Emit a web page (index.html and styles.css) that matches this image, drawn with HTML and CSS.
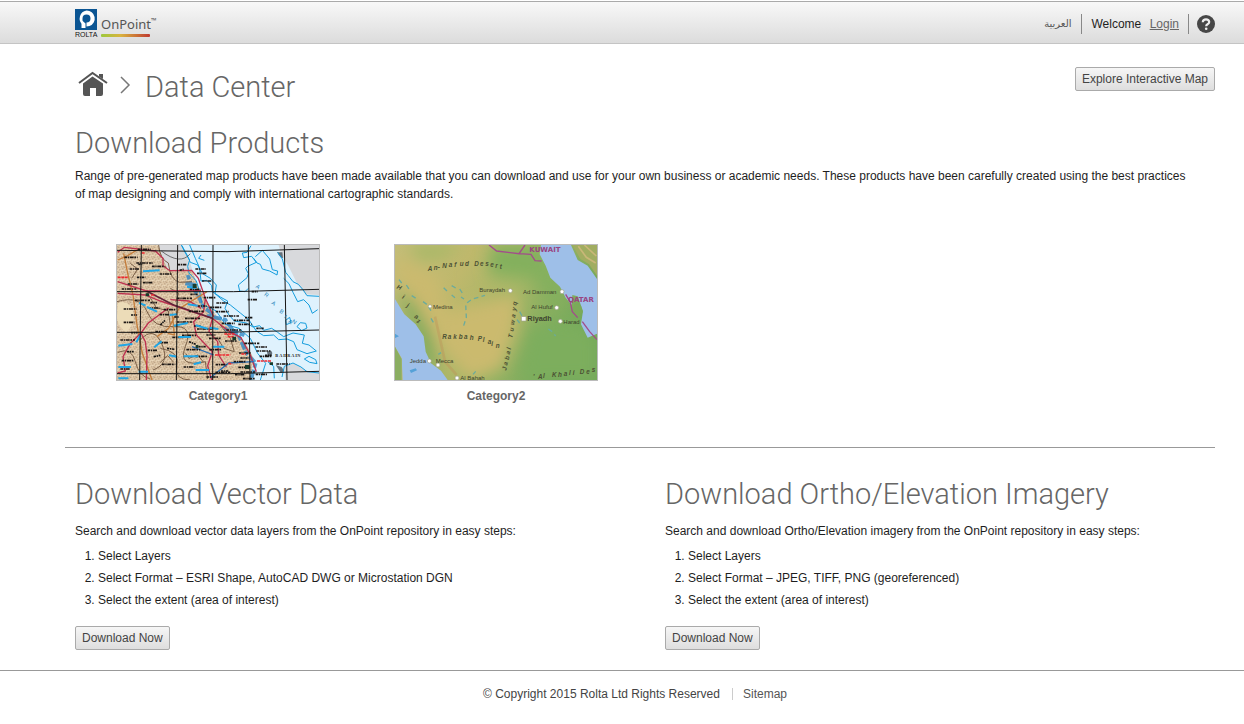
FILE: index.html
```html
<!DOCTYPE html>
<html lang="en">
<head>
<meta charset="utf-8">
<meta name="viewport" content="width=device-width, initial-scale=1">
<title>Data Center</title>
<link rel="stylesheet" href="styles.css">
</head>
<body>
<header class="header">
<a class="logo" href="#" aria-label="Rolta OnPoint">
<svg width="86" height="32" viewBox="0 0 86 32">
<rect x="0" y="1" width="22" height="21" fill="#0b5593"/>
<path d="M11.500 2.500A8 8 0 0 1 14.500 18L11.500 18.500V14.500A4 4 0 1 0 7.500 10.500V16.500A8 8 0 0 1 11.500 2.500Z" fill="#fff"/>
<path d="M6.500 12L10.500 15.500V20H6.500Z" fill="#fff"/>
<text x="0" y="29" class="logo-rolta">ROLTA</text>
<text x="26" y="21" class="logo-name">OnPoint</text>
<text x="76" y="15" class="logo-tm">™</text>
<defs>
<linearGradient id="bar"><stop offset="0" stop-color="#9cc93c"/><stop offset=".4" stop-color="#d9b33f"/><stop offset="1" stop-color="#bf3a31"/></linearGradient>
</defs>
<rect x="26" y="26" width="49" height="3" rx="1" fill="url(#bar)"/>
</svg>
</a>
<nav class="user">
<a class="lang" href="#" lang="ar">العربية</a>
<span class="welcome">Welcome <a class="login" href="#">Login</a></span>
<a class="help" href="#" aria-label="Help">
<svg width="18" height="18" viewBox="0 0 18 18"><circle cx="9" cy="9" r="9" fill="#474747"/><path d="M5.800 7.200Q5.800 4.300 9 4.300T12.200 7Q12.200 8.300 10.500 9.300Q9.200 10 9.200 11.200" fill="none" stroke="#eee" stroke-width="2.200"/><circle cx="9.200" cy="13.700" r="1.300" fill="#eee"/></svg>
</a>
</nav>
</header>

<main class="page">
<div class="crumbs">
<a class="home" href="#" aria-label="Home">
<svg width="32" height="28" viewBox="0 0 32 28"><path d="M2 13L15.500 3L30 13" fill="none" stroke="#555" stroke-width="2"/><path d="M22 4H26V9L22 6.500Z M6 13.500L15.500 6.500L26 13.500V24Q26 26 24 26H19V18H13V26H8Q6 26 6 24Z" fill="#555"/></svg>
</a>
<svg class="arrow" width="12" height="18" viewBox="0 0 12 18"><path d="M2 1L10 9L2 17" fill="none" stroke="#777" stroke-width="1.500"/></svg>
<h1>Data Center</h1>
<button class="btn explore" type="button">Explore Interactive Map</button>
</div>

<section class="products">
<h2>Download Products</h2>
<p>Range of pre-generated map products have been made available that you can download and use for your own business or academic needs. These products have been carefully created using the best practices of map designing and comply with international cartographic standards.</p>
<div class="gallery">
<a class="category" href="#">
<svg class="thumb" viewBox="20 20 606 405" preserveAspectRatio="none">
<defs>
<pattern id="soil" width="18" height="15" patternUnits="userSpaceOnUse">
<rect width="18" height="15" fill="#dfc8a8"/>
<path d="M0 0h3v3h-3zM9 3h3v3h-3zM15 9h3v3h-3zM3 9h3v3h-3zM6 12h3v3h-3z" fill="#a98d70"/>
<path d="M6 0h3v3h-3zM12 6h3v3h-3zM0 6h3v3h-3z" fill="#f7ead2"/>
</pattern>
</defs>
<rect x="20" y="20" width="606" height="405" fill="#dff2fd"/>
<!-- land -->
<path d="M20 20H145L158 60L176 98L246 96L262 142L288 186L318 232L350 262L388 292L412 326L430 360L420 425H20Z" fill="url(#soil)"/>
<path d="M22 195Q55 180 70 225Q74 260 48 282Q24 268 20 240Z" fill="#ecdcb8"/>
<path d="M145 20H213L236 60L246 95H176L158 62Z M505 20H626V170L585 168L560 135L533 80L512 48Z" fill="#d8d9dc"/>
<path d="M525 425L522 386L550 375L575 390L600 402H626V425Z" fill="#d8d9dc"/>
<path d="M470 340q12 -8 16 4q-2 12 -14 8zM496 380l18 6l8 12l-10 6zM500 42q12 20 18 16l-2 -16z" fill="#66717b"/>
<!-- shallow water -->
<path d="M213 20L224 42L238 65L232 84L236 104L258 128L268 160L275 198L318 218L345 258L386 270L420 300L442 345L466 375L450 425M215 22L230 50L240 72L262 80L268 92L272 128L290 126L304 142L306 160L330 176L352 188L344 210L356 230L372 248L408 254L428 266L448 262L460 276L484 270L502 282L520 295L548 284L582 290L576 315L596 320L618 338L590 346L560 334L550 310L530 302L505 304L490 290L460 292L438 278L416 245L390 224L360 200L340 188L314 166L318 140L300 120L275 105L255 60L238 20" fill="none" stroke="#149ddd" stroke-width="3"/>
<path d="M272 50L265 60L282 66M422 22L410 42L396 44L400 58L424 54L438 72L412 84L406 90L414 106L410 118L384 140L388 158L404 160L414 150M430 60L440 74L450 78L456 92L478 98L500 110L502 98L486 94L478 62L456 36L435 55M502 42L516 62L526 102L534 112L548 130L564 138L578 154L590 172L626 174M520 120L536 136L548 162L562 190L580 184L596 200L606 225L622 214M526 246l12 -9l4 16l-14 6zM560 265l10 -12l16 2l4 14l-16 8zM582 362l14 -8l20 10l4 12l-22 -4zM472 370L490 384L492 420M515 416L522 384L548 374L572 386L590 400L626 404" fill="none" stroke="#149ddd" stroke-width="3"/>
<path d="M232 110L244 145L262 168L278 205L310 229M342 270L385 292L408 344L436 374L422 425M225 135L256 140M290 232L345 244L368 276L402 291" fill="none" stroke="#2f86c4" stroke-width="11" opacity=".8" stroke-dasharray="14 6 25 4"/>
<!-- contours -->
<path d="M145 20Q148 62 174 74Q180 126 208 132L245 130M20 190Q90 170 110 220T190 265T225 325T285 370L292 422M110 162L138 208L174 218L180 260M90 305Q130 260 155 318T128 395M22 342Q64 325 75 370T120 422M150 330Q210 340 200 382T240 425M60 75L82 92L64 120M180 150L205 165L196 190M226 345L236 360L262 350L280 372M150 372L172 352L190 372M330 260L360 300L372 340L340 330L322 300" fill="none" stroke="#7a6048" stroke-width="3"/>
<path d="M40 45L52 105L68 170L80 260L96 345L125 425M22 65L52 52L85 32M140 295L175 270L205 212L290 160M172 285L192 290L186 225" fill="none" stroke="#c47d3b" stroke-width="4"/>
<!-- roads -->
<path d="M22 42L42 27L135 38L158 60L158 82L178 97L244 96L264 120L285 180L310 235M22 130L108 158L272 157M22 165L105 170L150 188L306 240L352 276L392 298L420 350L438 400M22 404L45 398L38 355L60 315L92 284L114 254L175 208M92 284L105 310L110 350L108 425M285 180L280 220L250 250L258 290L306 340L292 382L304 425M272 210L236 188L180 184M306 240L296 280L322 310L325 350L348 386" fill="none" stroke="#bd3150" stroke-width="4"/>
<path d="M108 158L190 200L306 240" fill="none" stroke="#63243a" stroke-width="5"/>
<path d="M300 418L355 374L430 370M245 325L310 350" fill="none" stroke="#276db4" stroke-width="4"/>
<!-- place marks -->
<path d="M82 33h40M42 57h40M78 74h50M125 84h40M58 92h30M148 107h38M34 152h44M52 137h32M98 133h30M74 186h45M40 212h40M160 214h38M148 229h30M200 251h48M40 252h32M30 305h44M145 313h30M186 297h32M112 336h30M34 367h38M155 378h40M30 392h30M135 280h38M115 209h32M202 79h26M255 92h32M260 105h30M275 128h30M238 153h32M200 180h45M280 178h38M318 194h38M298 207h38M235 219h45M224 240h45M316 220h40M340 233h48M370 246h46M384 258h40M260 272h48M334 255h40M348 275h45M215 291h42M296 300h38M344 308h36M228 334h42M297 334h38M402 315h45M435 326h38M438 338h42M255 354h38M386 344h38M448 354h38M220 386h32M316 379h32M370 370h38M384 387h34M315 402h45M374 409h30M288 416h38M436 408h34M412 184h30M424 160h18M498 377h40M390 401h45M398 421h38" stroke="#1c1714" stroke-width="5" stroke-dasharray="8 2 4 2 12 2 5 3" fill="none"/>
<path d="M84 78h12M80 117h25M62 230h18M120 193h20M62 283h20M240 168h22M192 236h14M263 203h26M251 263h20M288 290h27M264 325h22M390 359h25M332 398h22M404 238h22M438 270h22M464 351h20M150 260l14 -14M208 96l12 -3M170 330l24 3M130 355l20 -4M236 310l20 8M50 340h20" stroke="#141414" stroke-width="5" stroke-dasharray="7 2 4 2" fill="none"/>
<path d="M98 99l50 -3M86 194l20 7M110 206l30 14M178 230l22 -2M190 262l42 -8M204 296h38M308 325h34M250 378l22 -6M220 354h44M24 322l42 -5M132 327l22 -18M24 386h38M85 400h28M176 351l24 4M256 261l36 10M230 145l28 4M232 198l30 4M298 268l26 4M256 395h40M24 420h30M78 312l12 -22" stroke="#20a6e6" stroke-width="6" fill="none"/>
<path d="M22 117h30M94 44h10M314 350h46M342 287h30M352 295h18M440 368h42M393 347h14M354 376h12M122 170h12" stroke="#f0272e" stroke-width="5" stroke-dasharray="9 2" fill="none"/>
<path d="M106 165h10v9h-10zM247 137h12v12h-12zM366 295h11v11h-11zM404 380h14v12h-14zM256 320h8v9h-8zM478 372h10v8h-10z" fill="#183c2c"/>
<!-- grid -->
<path d="M93 20L88 425M202 20L198 425M308 20L307 425M414 20L419 425M522 20L530 425M20 36L350 40L626 31M20 160H370L626 153M20 282H340L626 275M20 406H360L626 399" stroke="#151515" stroke-width="3" fill="none"/>
<path d="M153 38Q210 82 240 46" stroke="#333" stroke-width="2" fill="none"/>
<text class="sea" x="435 460 482 506 520 532" y="147 171 196 221 238 252" rotate="35">ARABIAN</text>
<text class="bahrain" x="495 507 519 531 543 555 561" y="356">BAHRAIN</text>
</svg>
<span>Category1</span>
</a>
<a class="category" href="#">
<svg class="thumb" viewBox="20 20 606 405" preserveAspectRatio="none">
<defs>
<linearGradient id="land" x1="0" y1="0" x2="1" y2=".35"><stop offset="0" stop-color="#c3bd78"/><stop offset=".35" stop-color="#bfb86c"/><stop offset=".62" stop-color="#a5b666"/><stop offset="1" stop-color="#72a85a"/></linearGradient>
<filter id="soft" x="-30%" y="-30%" width="160%" height="160%"><feGaussianBlur stdDeviation="22"/></filter>
</defs>
<rect x="20" y="20" width="606" height="405" fill="url(#land)"/>
<g filter="url(#soft)">
<path d="M60 20H230L160 60L90 65Z" fill="#a6b866"/>
<path d="M20 50L150 115L170 220L390 165L385 270L340 390L240 425L175 345L135 280L90 200L20 110Z" fill="#cbba6e"/>
<path d="M20 150L75 190L130 290L150 425L105 380L62 250Z" fill="#7aaa5c"/>
<path d="M310 20H460L530 160L500 220L440 120L300 110Z" fill="#83b05d"/>
<path d="M425 265L570 245L626 300V425H390Z" fill="#7dae5d"/>
</g>
<path d="M140 235L158 315L170 370L205 410" stroke="#bf9158" stroke-width="8" opacity=".4" fill="none"/>
<path d="M458 20H548L568 65L598 82L626 122V286L598 298L578 258L584 218L568 174L552 170L550 200L532 178L515 145L486 118L472 82L454 48Z" fill="#9ebfe8"/>
<path d="M20 182L48 228L82 258L106 294L112 340L128 375L158 397L178 425H43L40 360L20 325Z" fill="#9ebfe8"/>
<path d="M552 20H626V112L602 78L576 62Z" fill="#a1ad61"/>
<path d="M570 24L594 57L622 74M588 20L624 53" stroke="#c9b778" stroke-width="5" fill="none"/>
<path d="M20 325L40 362V425H20Z" fill="#8bae62"/>
<path d="M558 200Q580 190 582 222L567 240L553 220Z" fill="#7baa59"/>
<path d="M302 20L325 38L392 46L410 20M392 46L428 48L440 67L460 68M532 168L546 192L552 220L568 238M582 250L604 280L626 304" fill="none" stroke="#a24d8b" stroke-width="4"/>
<path d="M166 148l12 12M190 142l14 8M190 170l10 8M214 152l8 12M54 140l8 12M70 172l16 10M104 190l14 10M120 205l12 18M128 240l8 14M218 176l9 6M226 262l8 -25l-2 -40l18 -14l40 -12M394 220l8 14M386 244l8 10M480 272l12 8M254 408l8 -9M150 348l8 -5M32 124l8 10M498 288l4 5" fill="none" stroke="#6bab9b" stroke-width="4" stroke-dasharray="14 10"/>
<path d="M20 286l12 8l-12 5zM64 396l18 -6l4 6l-18 8z" fill="#55a1d7"/>
<g fill="#fff" stroke="#a0a287" stroke-width="2"><circle cx="366" cy="157" r="6"/><circle cx="521" cy="160" r="6"/><circle cx="505" cy="208" r="6"/><circle cx="516" cy="249" r="6"/><circle cx="125" cy="204" r="5"/><circle cx="123" cy="368" r="6"/><circle cx="149" cy="380" r="6"/><circle cx="206" cy="419" r="6"/><rect x="399" y="235" width="14" height="13"/></g>
<g class="places"><text x="273" y="162">Buraydah</text><text x="404" y="166">Ad Damman</text><text x="429" y="212">Al Hufuf</text><text x="525" y="256">Harad</text><text x="134" y="211">Medina</text><text x="64" y="373">Jedda</text><text x="142" y="373">Mecca</text><text x="216" y="424">Al Bahah</text><text class="capital" x="417" y="249">Riyadh</text></g>
<g class="countries"><text x="423" y="42">KUWAIT</text><text x="539" y="192">QATAR</text></g>
<g class="regions">
<text x="118 136 148 162 181 198 214 230 247 258 275 291 306 321 334" y="98 95 92 90 87 85 83 82 82 82 83 84 86 89 92">An-Nafud Desert</text>
<text x="162 178 195 211 227 244 258 268 283 298 309 322" y="302 302 302 302 303 304 305 307 312 318 323 329">Rakbah Plain</text>
<text x="354 357 361 364 367 369 372 375 377 380 382 384" y="397 382 366 349 334 321 300 280 261 239 219 202" rotate="-78">Jabal Tuwayq</text>
<text x="434 449 464 475 491 509 526 542 553 564 574 594 610" y="422 421 420 419 417 415 412 411 410 409 408 406 402">'Al Khali Des</text>
<text x="24 40 54 77 84" y="150 180 205 238 252" rotate="25">Hijaz</text>
</g>
</svg>
<span>Category2</span>
</a>
</div>
</section>

<div class="columns">
<section>
<h2>Download Vector Data</h2>
<p>Search and download vector data layers from the OnPoint repository in easy steps:</p>
<ol>
<li>Select Layers</li>
<li>Select Format – ESRI Shape, AutoCAD DWG or Microstation DGN</li>
<li>Select the extent (area of interest)</li>
</ol>
<button class="btn" type="button">Download Now</button>
</section>
<section>
<h2>Download Ortho/Elevation Imagery</h2>
<p>Search and download Ortho/Elevation imagery from the OnPoint repository in easy steps:</p>
<ol>
<li>Select Layers</li>
<li>Select Format – JPEG, TIFF, PNG (georeferenced)</li>
<li>Select the extent (area of interest)</li>
</ol>
<button class="btn" type="button">Download Now</button>
</section>
</div>
</main>

<footer class="footer">
<span>© Copyright 2015 Rolta Ltd Rights Reserved</span>
<a href="#">Sitemap</a>
</footer>
</body>
</html>
```
FILE: styles.css
```css
* {
box-sizing: border-box;
}
body {
margin: 0;
background: #fff;
color: #1e1e1e;
font: 12px/18px "Liberation Sans", Arial, sans-serif;
}
svg {
display: block;
}
h1, h2 {
margin: 0;
color: #666;
font: 300 29px/36px Roboto, sans-serif;
}
p {
margin: 0;
}

/* header */
.header {
display: flex;
align-items: center;
justify-content: space-between;
height: 43px;
margin-top: 1px;
padding: 3px 29px 0 75px;
border-top: 1px solid #aaa;
border-bottom: 1px solid #c4c4c4;
background: linear-gradient(#f8f8f8, #dcdcdc);
}
.logo-rolta {
font: 7px "Liberation Sans", Arial, sans-serif;
fill: #111;
}
.logo-name {
font: 13px "Noto Sans", sans-serif;
fill: #555;
}
.logo-tm {
font: 7px "Noto Sans", sans-serif;
fill: #555;
}
.user {
display: flex;
align-items: center;
}
.lang {
padding-right: 10px;
color: #555;
font: 10px/20px "DejaVu Sans", sans-serif;
text-decoration: none;
}
.welcome {
padding: 0 9px;
border: solid #888;
border-width: 0 1px;
line-height: 20px;
}
.login {
margin-left: 5px;
color: #666;
}
.help {
margin-left: 8px;
}

/* content */
.page {
padding: 23px 29px 0 65px;
}
.crumbs {
display: flex;
align-items: flex-start;
padding-left: 12px;
}
.home {
margin-top: 3px;
}
.arrow {
margin: 9px 14px 0 10px;
}
.crumbs h1 {
margin-top: 2px;
}
.btn {
height: 24px;
padding: 0 6px;
border: 1px solid #aaa;
border-radius: 2px;
background: linear-gradient(#f6f6f6, #dedede);
color: #444;
font: 12px "Liberation Sans", Arial, sans-serif;
}
.explore {
margin-left: auto;
}
.products {
padding: 20px 0 42px 10px;
border-bottom: 1px solid #999;
}
.products p {
margin-top: 6px;
padding-right: 20px;
}
.gallery {
display: flex;
flex-wrap: wrap;
gap: 74px;
padding: 41px 0 0 41px;
}
.category {
width: 204px;
color: #666;
font-weight: bold;
text-align: center;
text-decoration: none;
}
.thumb {
width: 100%;
height: 137px;
margin-bottom: 6px;
border: 1px solid #bbb;
}
.sea {
font: 17px "Liberation Sans", Arial, sans-serif;
fill: #2382b8;
}
.bahrain {
font: bold 13px "Liberation Serif", serif;
fill: #222;
}
.places {
font: 18px "Liberation Sans", Arial, sans-serif;
fill: #3d432e;
}
.capital {
font-size: 22px;
font-weight: bold;
}
.countries {
font: bold 21px "DejaVu Sans", sans-serif;
fill: #994482;
}
.regions {
font: italic bold 19px "Liberation Sans", Arial, sans-serif;
fill: #4c5134;
}

.columns {
display: grid;
grid-template-columns: 1fr 1fr;
gap: 30px;
padding: 28px 0 20px;
}
.columns section {
padding-left: 10px;
}
.columns p {
margin-top: 10px;
}
ol {
margin: 5px 0 15px;
padding-left: 23px;
line-height: 22px;
}

/* footer */
.footer {
display: flex;
align-items: center;
justify-content: center;
padding: 14px 0 20px 26px;
border-top: 1px solid #999;
color: #444;
}
.footer a {
margin-left: 12px;
padding-left: 10px;
border-left: 1px solid #ccc;
color: #555;
line-height: 12px;
text-decoration: none;
}
```
